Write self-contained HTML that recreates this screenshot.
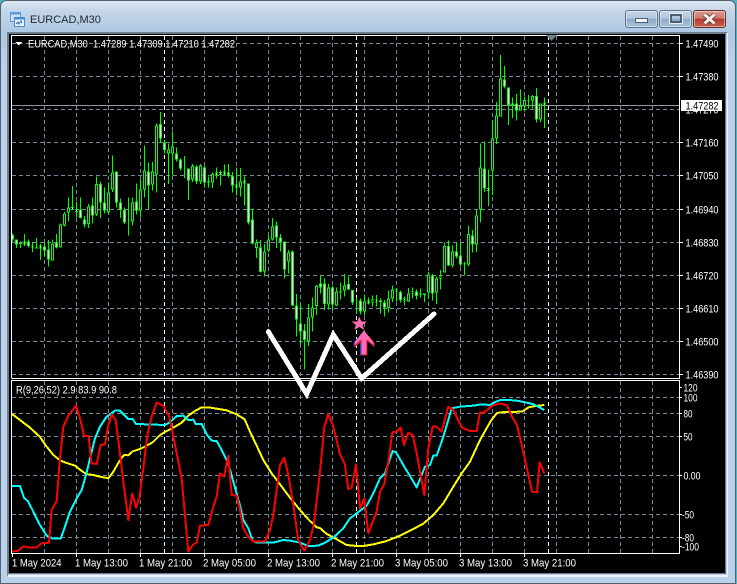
<!DOCTYPE html>
<html><head><meta charset="utf-8">
<style>
html,body{margin:0;padding:0;width:737px;height:584px;overflow:hidden;background:#4fb4c4}
#win{position:absolute;left:0;top:0;width:734px;height:582px;border:1px solid #56626e;border-radius:6px 6px 0 0;background:linear-gradient(180deg,#dbe6f0 0,#c4d6e8 10px,#adc8e3 32px,#b9d1ea 60px,#b9d1ea 100%)}
#client{position:absolute;left:8px;top:33px;width:718px;height:541px;background:#000;box-shadow:0 0 0 1px #6b7a88 inset}
#edge{position:absolute;left:7px;top:32px;width:719px;height:542px;border-right:1px solid #f2f6fa;border-bottom:2px solid #f2f6fa;border-left:1px solid #6f7d8b;border-top:1px solid #6f7d8b}
svg{position:absolute;left:0;top:0}
.title{position:absolute;left:30px;top:13px;font:11px "Liberation Sans",sans-serif;color:#1d2733;line-height:14px}
.btn{position:absolute;top:10px;width:31px;height:16px;border:1px solid #5f7388;border-radius:3px;box-shadow:0 0 0 1px rgba(255,255,255,.45) inset;background:linear-gradient(180deg,#c5d6e6 0,#b0c7dc 45%,#8dabc7 50%,#a9c3da 100%)}
.btn.c{border-color:#6a2a25;background:linear-gradient(180deg,#d99a8e 0,#cc7a6c 45%,#b3392a 50%,#c66152 100%)}
</style></head>
<body>
<div id="win"></div>
<div id="edge"></div>
<div id="client"></div>
<div class="title">EURCAD,M30</div>
<div class="btn" style="left:625px"><div style="position:absolute;left:9px;top:7px;width:11px;height:3px;background:#eef3f7;border:1px solid #4f5f70"></div></div>
<div class="btn" style="left:659px"><div style="position:absolute;left:10px;top:3px;width:6px;height:3px;border:2px solid #4f5f70;outline:1px solid #e6edf3;padding:1px 1px"></div></div>
<div class="btn c" style="left:693px"><svg width="31" height="16" viewBox="0 0 31 16"><path d="M10.5 3.5L20.5 12.5M20.5 3.5L10.5 12.5" stroke="#5a2a26" stroke-width="4.4" fill="none"/><path d="M10.5 3.5L20.5 12.5M20.5 3.5L10.5 12.5" stroke="#f5f1ef" stroke-width="3" fill="none"/></svg></div>

<svg width="737" height="584" viewBox="0 0 737 584" shape-rendering="crispEdges">
<!-- title icon -->
<g>
<rect x="10.5" y="12.5" width="10" height="9" fill="#cfe2f5" stroke="#5b9bd5"/>
<rect x="10.5" y="12.5" width="10" height="2" fill="#5b9bd5"/>
<rect x="14.5" y="17.5" width="10" height="9" fill="#e8f2fb" stroke="#4a8ccb"/>
<rect x="14.5" y="17.5" width="10" height="2" fill="#4a8ccb"/>
<path d="M16 24l2-2 1 2 2-3 1 2" stroke="#2f6fb0" fill="none" shape-rendering="auto"/>
</g>

<!-- grid -->
<g stroke="#778899" fill="none" stroke-dasharray="4 3">
<path d="M12 43.5H680M12 76.5H680M12 109.5H680M12 142.5H680M12 175.5H680M12 209.5H680M12 242.5H680M12 275.5H680M12 308.5H680M12 341.5H680M12 374.5H680"/>
<path d="M12 397.5H680M12 413.5H680M12 436.5H680M12 475.5H680M12 514.5H680M12 537.5H680"/>
<path d="M44.5 36V378M76.5 36V378M108.5 36V378M140.5 36V378M172.5 36V378M204.5 36V378M236.5 36V378M268.5 36V378M300.5 36V378M332.5 36V378M364.5 36V378M396.5 36V378M428.5 36V378M460.5 36V378M492.5 36V378M524.5 36V378M556.5 36V378M588.5 36V378M620.5 36V378M652.5 36V378"/>
<path d="M44.5 381V553M76.5 381V553M108.5 381V553M140.5 381V553M172.5 381V553M204.5 381V553M236.5 381V553M268.5 381V553M300.5 381V553M332.5 381V553M364.5 381V553M396.5 381V553M428.5 381V553M460.5 381V553M492.5 381V553M524.5 381V553M556.5 381V553M588.5 381V553M620.5 381V553M652.5 381V553"/>
</g>
<path d="M164.5 36V378M356.5 36V378M548.5 36V378M164.5 381V553M356.5 381V553M548.5 381V553" stroke="#fff" stroke-dasharray="4 3" fill="none"/>

<!-- current price line -->
<path d="M12 105.5H680" stroke="#8e99a3"/>

<!-- candles, coordinates in 3x units -->
<g transform="scale(.333333)" fill="none">
<g transform="translate(0,360)" stroke="#00ff00">
<path stroke-width="3" d="M37.5 340V365M49.5 358V384M61.5 365V384M73.5 342V378M85.5 358V382M97.5 366V396M109.5 354V386M121.5 372V420M133.5 366V408M145.5 360V440M157.5 358V422M169.5 342V386M181.5 310V383M193.5 276V320M205.5 232V304M217.5 198V270M229.5 246V292M241.5 232V296M253.5 288V322M265.5 252V324M277.5 232V310M289.5 170V288M301.5 184V294M313.5 202V280M325.5 188V280M337.5 106V216M349.5 154V262M361.5 236V294M373.5 262V312M385.5 232V346M397.5 232V316M409.5 190V284M421.5 180V292M433.5 76V232M445.5 128V268M457.5 126V212M469.5 10V218M481.5 -24V68M493.5 60V100M505.5 70V192M517.5 34V166M529.5 82V124M541.5 116V152M553.5 108V174M565.5 145V240M577.5 132V186M589.5 136V192M601.5 132V192M613.5 138V202M625.5 170V202M637.5 158V204M649.5 142V176M661.5 152V196M673.5 134V168M685.5 132V172M697.5 156V218M709.5 142V226M721.5 144V230M733.5 170V256M745.5 190V314M757.5 265V374M769.5 358V414M781.5 360V458M793.5 372V470M805.5 348V396M817.5 294V362M829.5 304V384"/>
<path stroke-width="9" d="M61.5 369V372M109.5 382V385M385.5 304V305M553.5 145V146M625.5 184V187"/>
<defs>
<path id="w3" d="M37.5 348V355M49.5 361V371M73.5 367V371M85.5 367V375M97.5 378V380M121.5 379V383M133.5 382V389M145.5 391V415M169.5 371V379M217.5 264V267M229.5 270V273M241.5 271V291M253.5 301V311M277.5 259V283M301.5 195V245M313.5 251V269M349.5 157V245M361.5 251V267M373.5 273V305M409.5 247V269M445.5 157V193M481.5 15V53M493.5 71V87M529.5 103V115M541.5 121V143M565.5 148V178M589.5 143V182M613.5 145V184M649.5 161V164M661.5 159V162M673.5 158V161M685.5 161V165M697.5 171V193M709.5 197V200M733.5 184V187M745.5 193V304M757.5 301V367M781.5 385V453M829.5 319V349"/>
<path id="b3" d="M157.5 373V419M181.5 316V380M193.5 283V313M205.5 265V274M265.5 263V309M289.5 195V281M325.5 221V275M337.5 160V206M397.5 250V301M421.5 211V269M433.5 154V205M457.5 157V191M469.5 19V161M505.5 91V97M517.5 83V97M577.5 141V175M601.5 139V181M637.5 165V185M721.5 187V200M769.5 371V381M793.5 397V452M805.5 361V389M817.5 323V355"/>
</defs>
<g stroke-width="9">
<use href="#w3" y="-3"/><use href="#w3" y="3"/><use href="#b3" y="-3"/><use href="#b3" y="3"/>
</g>
<g stroke-width="3">
<use href="#w3" stroke="#fff"/><use href="#b3" stroke="#000"/>
</g>
</g>

<g transform="translate(750,630)" stroke="#00ff00">
<path stroke-width="3" d="M91.5 72V125M103.5 94V206M115.5 120V190M127.5 122V288M139.5 252V380M151.5 282V405M163.5 342V478M175.5 282V408M187.5 262V365M199.5 225V315M211.5 196V250M223.5 205V300M235.5 222V298M247.5 228V298M259.5 232V288M271.5 218V268M283.5 192V260M295.5 200V240M307.5 240V285M319.5 262V312M331.5 265V314M343.5 254V316M355.5 262V284M367.5 256V290M379.5 255V290M391.5 266V310M403.5 270V320M415.5 242V308M427.5 226V276M439.5 234V274M451.5 242V278M463.5 260V286M475.5 234V276M487.5 232V266M499.5 238V268M511.5 236V262M523.5 250V276M535.5 186V264M547.5 192V272M559.5 200V282M571.5 180V238M583.5 98V188M595.5 92V168M607.5 106V172M619.5 96V146M631.5 98V170M643.5 156V196M655.5 46V168M667.5 60V128M679.5 0V126"/>
<path stroke-width="9" d="M271.5 244V248M391.5 272V276M511.5 250V254M523.5 251V255M643.5 160V162"/>
<defs>
<path id="w4" d="M91.5 85V93M103.5 97V176M127.5 127V284M139.5 289V325M151.5 343V362M163.5 365V387M211.5 223V229M223.5 223V279M247.5 235V281M295.5 225V235M307.5 243V274M331.5 275V301M355.5 275V277M379.5 271V273M403.5 280V289M439.5 240V242M451.5 249V267M463.5 268V270M499.5 247V255M547.5 199V247M595.5 111V163M619.5 127V137M631.5 139V161M667.5 79V101"/>
<path id="b4" d="M115.5 130V152M175.5 325V391M187.5 295V319M199.5 231V285M235.5 235V281M259.5 247V283M283.5 229V239M319.5 274V275M343.5 277V301M367.5 271V275M415.5 268V291M427.5 241V263M475.5 253V271M487.5 247V249M535.5 197V245M559.5 209V245M571.5 199V203M583.5 111V185M607.5 127V163M655.5 75V161M679.5 19V101"/>
</defs>
<g stroke-width="9">
<use href="#w4" y="-3"/><use href="#w4" y="3"/><use href="#b4" y="-3"/><use href="#b4" y="3"/>
</g>
<g stroke-width="3">
<use href="#w4" stroke="#fff"/><use href="#b4" stroke="#000"/>
</g>
</g>

<g transform="translate(1290,120)" stroke="#00ff00">
<path stroke-width="3" d="M151.5 310V548M163.5 304V456M175.5 388V498M187.5 240V465M199.5 186V312M211.5 45V230M223.5 78V146M235.5 142V255M247.5 172V234M259.5 162V242M271.5 148V212M283.5 170V214M295.5 165V205M307.5 165V205M319.5 144V248M331.5 190V246M343.5 172V264"/>
<path stroke-width="9" d="M247.5 190V196M295.5 181V183"/>
<defs>
<path id="w8" d="M163.5 388V443M175.5 447V450M223.5 121V137M235.5 145V192M259.5 193V209M319.5 171V235M343.5 191V193"/>
<path id="b8" d="M151.5 385V505M187.5 298V389M199.5 229V293M211.5 118V227M271.5 201V209M283.5 183V197M307.5 171V179M331.5 193V235"/>
</defs>
<g stroke-width="9">
<use href="#w8" y="-3"/><use href="#w8" y="3"/><use href="#b8" y="-3"/><use href="#b8" y="3"/>
</g>
<g stroke-width="3">
<use href="#w8" stroke="#fff"/><use href="#b8" stroke="#000"/>
</g>
</g>

<!-- indicator lines -->
<g stroke-width="6" stroke-linejoin="round">
<g transform="translate(0,1125)">
<polyline stroke="#ffff00" points="36,117 60,135 90,158 120,186 140,215 160,240 180,256 200,264 225,272 240,284 258,297 280,300 300,305 325,310 340,290 360,255 372,240 385,241 398,229 420,222 440,212 458,202 480,180 500,168 525,155 545,143 565,122 585,108 605,97 625,97 650,101 680,106 705,116 720,124"/>
</g>
<g transform="translate(720,1125)">
<polyline stroke="#ffff00" points="0,124 14,133 30,170 50,212 70,255 95,295 120,328 150,368 180,405 205,433 230,457 240,459 260,477 285,490 320,510 350,513 370,513 400,508 440,498 480,482 520,462 550,446 580,420 610,385 640,335 665,295 690,260 720,195 750,142"/>
</g>
<g transform="translate(1461,1125)">
<polyline stroke="#ffff00" points="9,142 15,133 30,114 50,111 105,110 125,97 145,93 172,90"/>
</g>
<g transform="translate(0,1125)">
<polyline stroke="#00ffff" points="36,333 60,333 72,368 85,380 100,410 120,450 140,482 160,491 182,491 195,455 210,410 230,370 245,345 258,300 270,250 285,190 300,155 320,125 345,107 360,107 385,132 398,132 408,147 440,148 495,150 510,142 530,123 550,122 565,135 580,134 587,147 605,147 620,178 635,197 650,198 665,225 685,265 700,320 715,375 720,390"/>
</g>
<g transform="translate(720,1125)">
<polyline stroke="#00ffff" points="0,390 10,435 25,460 38,498 50,503 100,503 130,495 150,497 180,503 205,513 235,512 255,503 280,488 310,460 330,430 350,415 380,392 400,355 420,310 435,295 458,228 468,232 490,270 530,337 555,275 570,270 580,242 590,242 610,185 635,100 660,95 700,92 725,88 750,90"/>
</g>
<g transform="translate(1461,1125)">
<polyline stroke="#00ffff" points="9,90 20,83 40,75 85,76 115,82 140,88 172,105"/>
</g>
<g transform="translate(0,1125)">
<polyline stroke="#ff0000" points="36,530 55,527 70,514 85,517 110,517 125,505 147,503 155,405 170,378 178,270 190,155 205,122 228,92 240,130 252,182 266,183 274,265 290,267 302,210 315,208 325,150 335,118 347,135 358,220 370,320 385,435 397,355 408,398 418,370 430,280 442,180 455,125 470,83 490,92 508,125 525,210 545,310 565,530 580,508 590,503 600,452 625,450 640,395 650,365 660,295 672,305 685,242 695,360 710,362 720,405"/>
</g>
<g transform="translate(720,1125)">
<polyline stroke="#ff0000" points="0,405 10,460 25,485 40,500 75,500 90,465 100,420 120,270 133,248 145,300 160,390 175,497 193,527 210,495 222,445 240,290 253,155 265,117 280,155 300,238 314,265 325,343 335,338 348,268 360,400 373,370 385,475 400,435 410,410 420,350 432,330 445,260 457,172 470,170 482,158 492,210 505,173 518,180 530,235 542,300 553,360 565,220 578,155 590,155 605,170 625,95 640,105 665,157 690,168 710,168 720,112 732,113 750,97"/>
</g>
<g transform="translate(1461,1125)">
<polyline stroke="#ff0000" points="9,97 20,90 42,85 60,92 75,125 90,150 110,235 135,350 150,352 158,262 172,295"/>
</g>
</g>
</g>

<!-- frames -->
<path d="M11.5 378.5V35.5H679.5V378.5H11.5M11.5 380.5H679.5V553.5H11.5Z" stroke="#fff" fill="none"/>
<!-- ticks -->
<path d="M680 43.5h3M680 76.5h3M680 142.5h3M680 175.5h3M680 209.5h3M680 242.5h3M680 275.5h3M680 308.5h3M680 341.5h3M680 374.5h3M680 387.5h2M680 397.5h2M680 413.5h2M680 436.5h2M680 475.5h2M680 514.5h2M680 537.5h2M680 546.5h2" stroke="#fff"/>
<path d="M12.5 554v3M76.5 554v3M140.5 554v3M204.5 554v3M268.5 554v3M332.5 554v3M396.5 554v3M460.5 554v3M524.5 554v3" stroke="#fff"/>

<!-- shift marker & menu triangle -->
<polygon points="546,35 557,35 551.5,41" fill="#708090"/>
<polygon points="15,42 22,42 18.5,45.5" fill="#fff"/>

<g shape-rendering="auto" font-family="'Liberation Sans',sans-serif" font-size="10.8" fill="#fff">
<text x="28" y="47.5" textLength="207" lengthAdjust="spacingAndGlyphs" xml:space="preserve">EURCAD,M30  1.47289 1.47309 1.47210 1.47282</text>
<text x="16" y="393.5" textLength="101" lengthAdjust="spacingAndGlyphs">R(9,26,52) 2.9 83.9 90.8</text>
<g>
<text x="685.5" y="47.5" textLength="33" lengthAdjust="spacingAndGlyphs">1.47490</text>
<text x="685.5" y="80.5" textLength="33" lengthAdjust="spacingAndGlyphs">1.47380</text>
<text x="685.5" y="113.5" textLength="33" lengthAdjust="spacingAndGlyphs">1.47270</text>
<text x="685.5" y="146.5" textLength="33" lengthAdjust="spacingAndGlyphs">1.47160</text>
<text x="685.5" y="179.5" textLength="33" lengthAdjust="spacingAndGlyphs">1.47050</text>
<text x="685.5" y="213.5" textLength="33" lengthAdjust="spacingAndGlyphs">1.46940</text>
<text x="685.5" y="246.5" textLength="33" lengthAdjust="spacingAndGlyphs">1.46830</text>
<text x="685.5" y="279.5" textLength="33" lengthAdjust="spacingAndGlyphs">1.46720</text>
<text x="685.5" y="312.5" textLength="33" lengthAdjust="spacingAndGlyphs">1.46610</text>
<text x="685.5" y="345.5" textLength="33" lengthAdjust="spacingAndGlyphs">1.46500</text>
<text x="685.5" y="378.5" textLength="33" lengthAdjust="spacingAndGlyphs">1.46390</text>
</g>
<rect x="681" y="100" width="41" height="11" fill="#fff"/>
<text x="685.5" y="109.5" fill="#000" textLength="33" lengthAdjust="spacingAndGlyphs">1.47282</text>
<g>
<text x="683.5" y="391.5" textLength="14" lengthAdjust="spacingAndGlyphs">120</text>
<text x="683.5" y="401.5" textLength="14" lengthAdjust="spacingAndGlyphs">100</text>
<text x="683.5" y="417.5" textLength="9" lengthAdjust="spacingAndGlyphs">80</text>
<text x="683.5" y="440.5" textLength="9" lengthAdjust="spacingAndGlyphs">50</text>
<text x="683.5" y="479.5" textLength="17" lengthAdjust="spacingAndGlyphs">0.00</text>
<text x="682" y="518.5" textLength="12" lengthAdjust="spacingAndGlyphs">-50</text>
<text x="682" y="541.5" textLength="12" lengthAdjust="spacingAndGlyphs">-80</text>
<text x="682" y="550.5" textLength="17" lengthAdjust="spacingAndGlyphs">-100</text>
</g>
<g>
<text x="12" y="566.5" textLength="49.5" lengthAdjust="spacingAndGlyphs">1 May 2024</text>
<text x="75" y="566.5" textLength="53" lengthAdjust="spacingAndGlyphs">1 May 13:00</text>
<text x="139" y="566.5" textLength="53" lengthAdjust="spacingAndGlyphs">1 May 21:00</text>
<text x="203" y="566.5" textLength="53" lengthAdjust="spacingAndGlyphs">2 May 05:00</text>
<text x="267" y="566.5" textLength="53" lengthAdjust="spacingAndGlyphs">2 May 13:00</text>
<text x="331" y="566.5" textLength="53" lengthAdjust="spacingAndGlyphs">2 May 21:00</text>
<text x="395" y="566.5" textLength="53" lengthAdjust="spacingAndGlyphs">3 May 05:00</text>
<text x="459" y="566.5" textLength="53" lengthAdjust="spacingAndGlyphs">3 May 13:00</text>
<text x="523" y="566.5" textLength="53" lengthAdjust="spacingAndGlyphs">3 May 21:00</text>
</g>
</g>

<!-- drawn objects -->
<g transform="scale(.333333) translate(750,630)">
<polyline points="55,365 170,552 250,374 335,505 552,312" fill="none" stroke="#fff" stroke-width="15" stroke-linejoin="miter" stroke-linecap="round"/>
<polygon points="328,320 334,334 350,335 338,345 343,360 328,351 313,360 318,345 306,335 322,334" fill="#ff69b4"/>
<polygon points="342,362 374,398 374,412 353,394 353,436 331,436 331,394 311,412 311,398" fill="#3c3cc8" transform="translate(-1,0)"/>
<polygon points="342,362 374,398 374,412 353,394 353,436 336,436 336,394 314,412 314,398" fill="#d01818"/>
<polygon points="342,362 370,396 370,405 350,388 350,433 334,433 334,388 315,405 315,396" fill="#ff69b4"/>
</g>
</svg>
</body></html>
